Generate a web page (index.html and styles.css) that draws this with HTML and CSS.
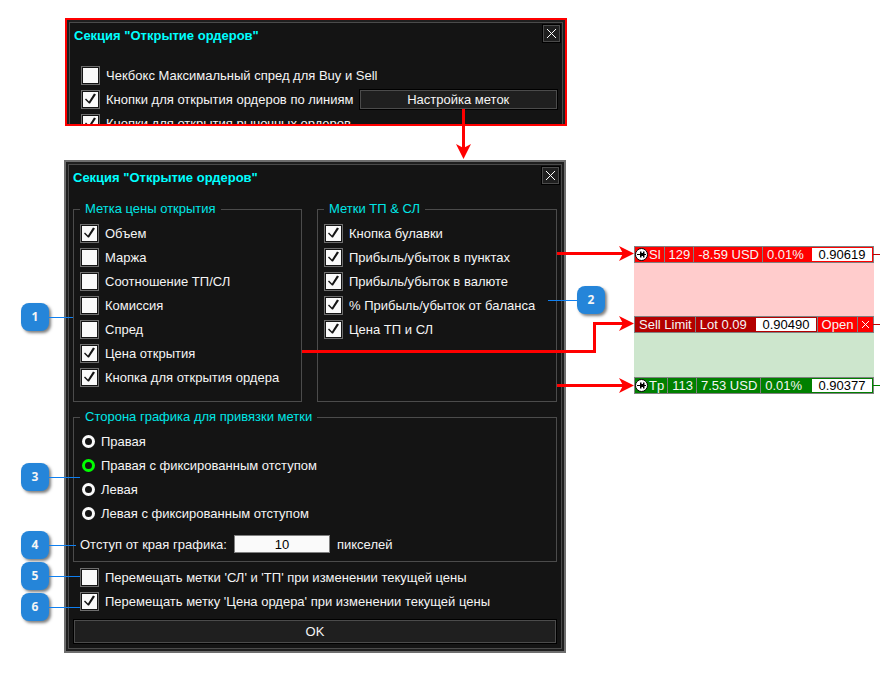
FILE: index.html
```html
<!DOCTYPE html>
<html lang="ru">
<head>
  <meta charset="UTF-8" />
  <meta name="viewport" content="width=device-width, initial-scale=1.0"/>
  <title>Секция "Открытие ордеров"</title>
  <link rel="stylesheet" href="styles.css">
</head>
<body>
  <main class="page">
    <div class="dialogs">
      <!-- section dialog, only its top part is visible -->
      <section class="preview">
        <div class="dialog dialog-cut">
          <div class="dialog-inner">
            <header class="dialog-header">
              <h2>Секция "Открытие ордеров"</h2>
              <button class="close" type="button" aria-label="Закрыть">
                <svg viewBox="0 0 11 11"><path d="M1 1L10 10M10 1L1 10"/></svg>
              </button>
            </header>
            <div class="options">
              <label class="option"><input type="checkbox">Чекбокс Максимальный спред для Buy и Sell</label>
              <div class="option-row">
                <label class="option"><input type="checkbox" checked>Кнопки для открытия ордеров по линиям</label>
                <button class="button" type="button">Настройка меток</button>
              </div>
              <label class="option"><input type="checkbox" checked>Кнопки для открытия рыночных ордеров</label>
            </div>
          </div>
        </div>
        <svg class="arrow-down" viewBox="0 0 16 50">
          <path class="line" d="M7.5 0V42"/>
          <path class="head" d="M7.5 50L0 35L7.5 39L15 35Z"/>
        </svg>
      </section>

      <!-- label settings dialog -->
      <section class="settings">
        <div class="dialog">
          <div class="dialog-inner">
            <header class="dialog-header">
              <h2>Секция "Открытие ордеров"</h2>
              <button class="close" type="button" aria-label="Закрыть">
                <svg viewBox="0 0 11 11"><path d="M1 1L10 10M10 1L1 10"/></svg>
              </button>
            </header>

            <div class="groups">
              <fieldset class="group">
                <legend>Метка цены открытия</legend>
                <label class="option"><input type="checkbox" checked>Объем</label>
                <label class="option"><input type="checkbox">Маржа</label>
                <label class="option"><input type="checkbox">Соотношение ТП/СЛ</label>
                <label class="option"><input type="checkbox">Комиссия</label>
                <label class="option"><input type="checkbox">Спред</label>
                <label class="option"><input type="checkbox" checked>Цена открытия</label>
                <label class="option"><input type="checkbox" checked>Кнопка для открытия ордера</label>
              </fieldset>
              <fieldset class="group">
                <legend>Метки ТП &amp; СЛ</legend>
                <label class="option"><input type="checkbox" checked>Кнопка булавки</label>
                <label class="option"><input type="checkbox" checked>Прибыль/убыток в пунктах</label>
                <label class="option"><input type="checkbox" checked>Прибыль/убыток в валюте</label>
                <label class="option"><input type="checkbox" checked>% Прибыль/убыток от баланса</label>
                <label class="option"><input type="checkbox" checked>Цена ТП и СЛ</label>
              </fieldset>
            </div>

            <fieldset class="group side">
              <legend>Сторона графика для привязки метки</legend>
              <label class="option"><input type="radio" name="side">Правая</label>
              <label class="option"><input type="radio" name="side" checked>Правая с фиксированным отступом</label>
              <label class="option"><input type="radio" name="side">Левая</label>
              <label class="option"><input type="radio" name="side">Левая с фиксированным отступом</label>
              <div class="field">
                <label for="offset">Отступ от края графика:</label>
                <input id="offset" type="text" value="10">
                <span>пикселей</span>
              </div>
            </fieldset>

            <div class="options">
              <label class="option"><input type="checkbox">Перемещать метки 'СЛ' и 'ТП' при изменении текущей цены</label>
              <label class="option"><input type="checkbox" checked>Перемещать метку 'Цена ордера' при изменении текущей цены</label>
            </div>
            <button class="button ok" type="button">OK</button>
          </div>
        </div>

        <!-- numbered callouts -->
        <span class="badge badge1">1</span>
        <span class="badge badge2">2</span>
        <span class="badge badge3">3</span>
        <span class="badge badge4">4</span>
        <span class="badge badge5">5</span>
        <span class="badge badge6">6</span>
      </section>
    </div>

    <!-- labels on the chart -->
    <section class="chart">
      <svg class="arrows" viewBox="0 0 332 160">
        <path class="line" d="M255 13.5H324M0 111.5H292.5V83.5H324M255 145.5H324"/>
        <path class="head" d="M332 13.5L317 6L321 13.5L317 21Z"/>
        <path class="head" d="M332 83.5L317 76L321 83.5L317 91Z"/>
        <path class="head" d="M332 145.5L317 138L321 145.5L317 153Z"/>
      </svg>

      <div class="order sl">
        <svg class="pin" viewBox="0 0 13 13">
          <circle cx="6.5" cy="6.5" r="6"/>
          <path d="M2 6h3V3.5h1.5V5H8V3.5h1.5V6H11v1H9.5v2.5H8V8H6.5v1.5H5V7H2Z"/>
        </svg>
        <span class="name">Sl</span>
        <span>129</span>
        <span>-8.59 USD</span>
        <span class="last">0.01%</span>
        <span class="price">0.90619</span>
      </div>
      <div class="zone loss"></div>
      <div class="order entry">
        <span>Sell Limit</span>
        <span class="last">Lot 0.09</span>
        <span class="price">0.90490</span>
        <button class="open" type="button">Open</button>
        <button class="cancel" type="button" aria-label="Удалить">
          <svg viewBox="0 0 9 9"><path d="M1 1L8 8M8 1L1 8"/></svg>
        </button>
      </div>
      <div class="zone profit"></div>
      <div class="order tp">
        <svg class="pin" viewBox="0 0 13 13">
          <circle cx="6.5" cy="6.5" r="6"/>
          <path d="M2 6h3V3.5h1.5V5H8V3.5h1.5V6H11v1H9.5v2.5H8V8H6.5v1.5H5V7H2Z"/>
        </svg>
        <span class="name">Tp</span>
        <span>113</span>
        <span>7.53 USD</span>
        <span class="last">0.01%</span>
        <span class="price">0.90377</span>
      </div>
    </section>
  </main>
</body>
</html>
```

FILE: styles.css
```css
* {
  box-sizing: border-box;
}
body {
  margin: 0;
  background: #fff;
  font-family: "Liberation Sans", Arial, sans-serif;
  font-size: 13px;
  color: #f5f5f5;
}
button, input {
  font: inherit;
  color: inherit;
  margin: 0;
  padding: 0;
}
svg {
  display: block;
}

/* page columns */
.page {
  display: flex;
  align-items: flex-start;
  gap: 68px;
  padding: 18px 9px 22px 64px;
}
.dialogs {
  flex: 1;
  min-width: 0;
  display: flex;
  flex-direction: column;
  gap: 34px;
}
.preview, .settings {
  position: relative;
}
.preview {
  margin: 0 -1px 0 1px;
}

/* dialog window */
.dialog {
  padding: 2px;
  border: 2px solid #6e6e6e;
  background: #1f1f1f;
}
.dialog-inner {
  padding: 0 4px 4px;
  border: 1px solid #4b4b4b;
  background: #141414;
}
.dialog-cut {
  height: 108px;
  overflow: hidden;
  border-color: #f00;
}
.dialog-cut .dialog-header {
  margin-bottom: 4px;
}
.dialog-header {
  display: flex;
  justify-content: space-between;
  align-items: flex-start;
  height: 36px;
}
.dialog-header h2 {
  margin: 0;
  font-size: 13px;
  line-height: 25px;
  color: #0ff;
}
.close {
  display: grid;
  place-items: center;
  width: 19px;
  height: 19px;
  margin: 1px -3px 0 0;
  border: 1px solid #000;
  outline: 1px solid #4b4b4b;
  outline-offset: -2px;
  background: #1f1f1f;
}
.close svg {
  width: 11px;
  height: 11px;
  stroke: #fff;
}
.button {
  height: 21px;
  border: 1px solid #000;
  outline: 1px solid #4b4b4b;
  outline-offset: -2px;
  background: #1f1f1f;
}

/* option rows */
.options {
  padding-left: 7px;
}
.option {
  display: flex;
  align-items: center;
  gap: 6px;
  height: 24px;
  white-space: nowrap;
}
.option-row {
  display: flex;
  align-items: center;
  gap: 5px;
}
.option-row .button {
  flex: 1;
}
input[type="checkbox"] {
  appearance: none;
  width: 19px;
  height: 19px;
  padding: 1px;
  border: 1px solid #6e6e6e;
  background: #fafafa content-box;
}
input[type="checkbox"]:checked::before {
  content: "";
  display: block;
  width: 15px;
  height: 15px;
  background: #141414;
  clip-path: polygon(2px 8px, 3px 7px, 6px 10px, 11px 2px, 13px 3px, 7px 12px, 6px 12px);
}
input[type="radio"] {
  appearance: none;
  width: 13px;
  height: 13px;
  margin-left: 2px;
  border: 3px solid #fafafa;
  border-radius: 50%;
}
input[type="radio"]:checked {
  border-color: #0f0;
}

/* groups */
.groups {
  display: grid;
  grid-template-columns: 229fr 240fr;
  gap: 15px;
}
.group {
  min-width: 0;
  margin: 0;
  padding: 4px 6px 12px;
  border: 1px solid #4b4b4b;
}
.group legend {
  padding: 0 5px;
  line-height: 16px;
  color: #00e6e6;
}
.side {
  margin: 7px 0 3px;
  padding-bottom: 7px;
}
.field {
  display: flex;
  align-items: center;
  gap: 7px;
  margin-top: 9px;
  height: 20px;
}
.field input {
  width: 96px;
  height: 18px;
  border: 1px solid #808080;
  background: #fafafa;
  color: #000;
  text-align: center;
}
.ok {
  display: block;
  width: 100%;
  height: 25px;
  margin-top: 6px;
}

/* arrows */
.arrow-down {
  position: absolute;
  top: 91px;
  right: 95px;
  width: 16px;
  height: 50px;
}
.arrows {
  position: absolute;
  top: -6px;
  right: 100%;
  width: 332px;
  height: 160px;
}
.line {
  fill: none;
  stroke: #f00;
  stroke-width: 3;
}
.head {
  fill: #f00;
}

/* numbered callouts */
.badge {
  position: absolute;
  left: -43px;
  width: 28px;
  height: 28px;
  border-radius: 8px;
  background: #2585d9;
  box-shadow: 2px 2px 3px rgba(0, 0, 0, 0.5);
  font-family: "Open Sans", sans-serif;
  font-size: 12px;
  font-weight: bold;
  line-height: 28px;
  text-align: center;
}
.badge::after {
  content: "";
  position: absolute;
  top: 14px;
  left: 28px;
  width: 31px;
  height: 1px;
  background: #0f7ff0;
}
.badge1 { top: 143px; }
.badge2 { top: 126px; left: auto; right: -39px; }
.badge3 { top: 303px; }
.badge4 { top: 371px; }
.badge5 { top: 402px; }
.badge6 { top: 433px; }
.badge1::after { width: 24px; }
.badge2::after { left: auto; right: 28px; width: 29px; }
.badge4::after { width: 27px; }

/* chart */
.chart {
  position: relative;
  flex: 0 0 240px;
  margin-top: 228px;
}
.order {
  position: relative;
  display: flex;
  height: 17px;
  border: 1px solid #808080;
  line-height: 15px;
  white-space: nowrap;
}
.order::after {
  content: "";
  position: absolute;
  top: 7px;
  left: 100%;
  width: 7px;
  height: 1px;
  background: #c00000;
}
.order span {
  padding: 0 3px 0 4px;
  border-right: 1px solid #808080;
}
.order .name {
  padding-left: 1px;
}
.order .last {
  border: 0;
}
.order .price {
  width: 60px;
  margin: 1px 1px 1px auto;
  padding: 0;
  border: 0;
  background: #fff;
  color: #000;
  line-height: 13px;
  text-align: center;
}
.sl { background: #f00; }
.entry { background: #b30000; }
.tp { background: #008000; }
.tp::after { background: #008000; }
.pin {
  width: 13px;
  height: 15px;
}
.pin circle {
  fill: #fff;
  stroke: #000;
}
.pin path {
  fill: #000;
}
.open, .cancel {
  border: 0;
  border-left: 1px solid #808080;
  background: #f00;
}
.open {
  width: 40px;
}
.cancel {
  display: grid;
  place-items: center;
  width: 16px;
}
.cancel svg {
  width: 9px;
  height: 9px;
  stroke: #fff;
}
.loss {
  height: 53px;
  background: #ffcccc;
}
.profit {
  height: 44px;
  background: #cde6cd;
}
```
